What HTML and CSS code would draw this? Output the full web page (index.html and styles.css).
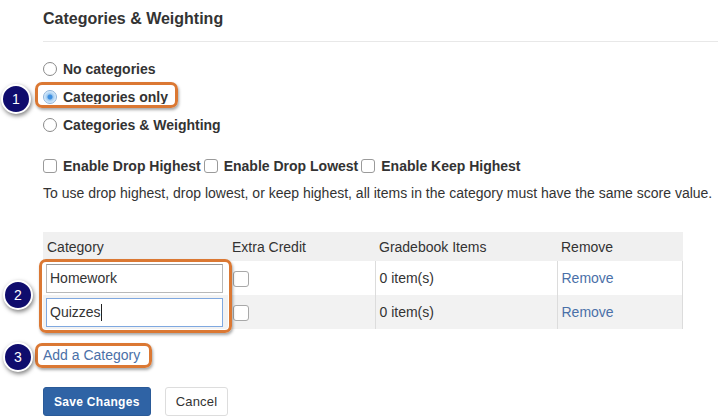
FILE: index.html
```html
<!DOCTYPE html>
<html>
<head>
<meta charset="utf-8">
<link rel="stylesheet" href="styles.css">
</head>
<body>
<div class="page">
  <h2 class="title">Categories &amp; Weighting</h2>
  <div class="rule"></div>

  <div class="radios">
    <label class="opt"><span class="radio"></span>No categories</label>
    <label class="opt"><span class="radio on"></span>Categories only</label>
    <label class="opt"><span class="radio"></span>Categories &amp; Weighting</label>
  </div>

  <div class="checks">
    <label class="chk"><span class="box"></span>Enable Drop Highest</label>
    <label class="chk"><span class="box"></span>Enable Drop Lowest</label>
    <label class="chk"><span class="box"></span>Enable Keep Highest</label>
  </div>
  <p class="info">To use drop highest, drop lowest, or keep highest, all items in the category must have the same score value.</p>

  <table class="cats">
    <thead>
      <tr><th class="c1">Category</th><th class="c2">Extra Credit</th><th class="c3">Gradebook Items</th><th class="c4">Remove</th></tr>
    </thead>
    <tbody>
      <tr class="odd">
        <td><div class="input">Homework</div></td>
        <td><span class="box lg"></span></td>
        <td>0 item(s)</td>
        <td><a class="link">Remove</a></td>
      </tr>
      <tr class="even">
        <td><div class="input focus">Quizzes<span class="caret"></span></div></td>
        <td><span class="box lg"></span></td>
        <td>0 item(s)</td>
        <td><a class="link">Remove</a></td>
      </tr>
    </tbody>
  </table>

  <div class="add"><a class="link">Add a Category</a></div>

  <div class="buttons">
    <button class="btn primary">Save Changes</button>
    <button class="btn">Cancel</button>
  </div>
</div>

<div class="hl hl1"></div>
<div class="hl hl2"></div>
<div class="hl hl3"></div>
<div class="badge b1">1</div>
<div class="badge b2">2</div>
<div class="badge b3">3</div>
</body>
</html>
```

FILE: styles.css
```css
html, body {
  margin: 0;
  padding: 0;
  background: #fff;
}
body {
  font-family: "Liberation Sans", Arial, sans-serif;
  color: #333;
  font-size: 14px;
  width: 718px;
  height: 417px;
  overflow: hidden;
  position: relative;
}
.page {
  padding: 10px 0 0 43px;
}
.title {
  margin: 0;
  font-size: 16px;
  font-weight: bold;
  line-height: 18px;
  color: #333;
}
.rule {
  height: 1px;
  background: #e8e8e8;
  margin: 13px 0 13px 0;
}
.radios {
  display: flex;
  flex-direction: column;
}
.opt {
  display: flex;
  align-items: center;
  height: 28px;
  font-weight: bold;
  font-size: 14px;
}
.radio {
  width: 12px;
  height: 12px;
  border: 1px solid #8a8a8a;
  border-radius: 50%;
  margin-right: 6px;
  background: #fff;
  box-sizing: content-box;
}
.radio.on {
  border-color: #8fb3d9;
  background: radial-gradient(circle, #3d8fe0 0 2px, #9cc8f0 3px, #dceefc 6px);
}
.checks {
  display: flex;
  align-items: center;
  height: 28px;
  margin-top: 13px;
}
.chk {
  display: flex;
  align-items: center;
  font-weight: bold;
  margin-right: 3px;
}
.box {
  display: inline-block;
  width: 12px;
  height: 12px;
  border: 1px solid #9a9a9a;
  border-radius: 3px;
  margin-right: 6px;
  background: #fff;
}
.box.lg {
  width: 14px;
  height: 14px;
  border-color: #a8a8a8;
  margin: 0;
  vertical-align: middle;
}
.info {
  margin: 0;
  line-height: 26px;
}
.cats {
  margin-top: 26px;
  border-collapse: collapse;
  width: 640px;
  table-layout: fixed;
}
.cats th {
  background: #f0f0f0;
  font-weight: normal;
  text-align: left;
  height: 29px;
  padding: 0 4px;
}
.c1 { width: 177px; }
.c2 { width: 139px; }
.c3 { width: 174px; }
.cats td {
  height: 34px;
  padding: 0 4px;
  border-left: 1px solid #dcdcdc;
}
.cats td:last-child {
  border-right: 1px solid #dcdcdc;
}
.cats td:first-child {
  padding: 0 0 0 3px;
  border-left: none;
}
.cats tr.even td {
  background: #f2f2f2;
}
.input {
  width: 172px;
  height: 27px;
  border: 1px solid #b8b8b8;
  border-top-color: #999;
  background: #fff;
  line-height: 27px;
  padding-left: 3px;
  box-sizing: content-box;
  font-size: 14px;
}
.input.focus {
  border-color: #7fa8e0;
}
.caret {
  display: inline-block;
  width: 1px;
  height: 17px;
  background: #222;
  vertical-align: -4px;
}
.link {
  color: #4a70a8;
  text-decoration: none;
}
.add {
  margin-top: 16px;
  line-height: 20px;
}
.buttons {
  margin-top: 22px;
  display: flex;
  gap: 14px;
}
.btn {
  font-family: "Liberation Sans", Arial, sans-serif;
  font-size: 13px;
  height: 29px;
  border: 1px solid #ddd;
  border-radius: 3px;
  background: #fff;
  color: #333;
  padding: 0 10px;
  letter-spacing: 0.2px;
  white-space: nowrap;
}
.btn.primary {
  background: #2f63a5;
  border-color: #2a5a98;
  color: #fff;
  font-weight: bold;
  font-size: 12px;
  letter-spacing: 0.3px;
  padding: 0 10px;
}

/* annotation overlays */
.hl {
  position: absolute;
  border: 3px solid #db7833;
  border-radius: 7px;
  box-shadow: 1px 2px 3px rgba(0,0,0,0.35), inset 0 0 0 1px #fff;
}
.hl1 { left: 35px; top: 82px; width: 137px; height: 20px; }
.hl2 { left: 39px; top: 259px; width: 187px; height: 68px; }
.hl3 { left: 35px; top: 343px; width: 111px; height: 19px; }
.badge {
  position: absolute;
  width: 26px;
  height: 26px;
  border-radius: 50%;
  background: #0f0c6d;
  border: 2px solid #fff;
  box-shadow: 1px 2px 4px rgba(0,0,0,0.5);
  color: #fff;
  font-size: 14px;
  line-height: 26px;
  text-align: center;
}
.b1 { left: 1px; top: 84px; }
.b2 { left: 3px; top: 280px; }
.b3 { left: 3px; top: 342px; }
```
